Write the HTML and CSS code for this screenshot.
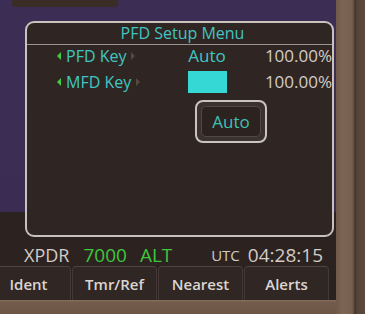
FILE: index.html
```html
<!DOCTYPE html>
<html>
<head>
<meta charset="utf-8">
<link rel="stylesheet" href="styles.css">
</head>
<body>
<div class="device">
  <div class="main">
    <div class="map">
      <div class="mini"></div>
      <div class="panel">
        <div class="title">PFD Setup Menu</div>
        <div class="rows">
          <div class="row">
            <div class="label"><span class="tri-l"></span><span class="ltext">PFD Key</span><span class="tri-r"></span></div>
            <div class="value">Auto</div>
            <div class="pct">100.00%</div>
          </div>
          <div class="row">
            <div class="label"><span class="tri-l"></span><span class="ltext">MFD Key</span><span class="tri-r"></span></div>
            <div class="value"><span class="block"></span></div>
            <div class="pct">100.00%</div>
          </div>
        </div>
        <div class="btn"><div class="btn-inner">Auto</div></div>
      </div>
    </div>
    <div class="status">
      <span class="xpdr">XPDR</span>
      <span class="code">7000</span>
      <span class="mode">ALT</span>
      <span class="utc">UTC</span>
      <span class="time">04:28:15</span>
    </div>
    <div class="softkeys">
      <div class="sk">Ident</div>
      <div class="sk">Tmr/Ref</div>
      <div class="sk">Nearest</div>
      <div class="sk">Alerts</div>
    </div>
  </div>
  <div class="bezel-r"></div>
  <div class="bezel-b"></div>
</div>
</body>
</html>
```
FILE: styles.css
```css
* { box-sizing: border-box; }
html, body { margin: 0; padding: 0; }
body {
  width: 365px;
  height: 314px;
  overflow: hidden;
  background: #2b221f;
  font-family: "Open Sans", Roboto, "Liberation Sans", sans-serif;
}
.device {
  display: grid;
  grid-template-columns: 336px 29px;
  grid-template-rows: 300px 14px;
  width: 365px;
  height: 314px;
}
.main {
  grid-column: 1;
  grid-row: 1;
  display: flex;
  flex-direction: column;
  overflow: hidden;
  background: #2c2320;
}
.map {
  height: 238px;
  display: flex;
  flex-direction: column;
  background: linear-gradient(#3b2d54 0, #3a2c52 212px, #2c2320 212px);
}
.mini {
  margin-left: 12px;
  width: 106px;
  height: 7px;
  background: #3a2c27;
  border-radius: 0 0 3px 3px;
}
.panel {
  margin-top: 14px;
  margin-left: 25px;
  width: 309px;
  height: 216px;
  border: 2px solid #c9c1bc;
  border-radius: 9px;
  background: #2f2623;
  display: flex;
  flex-direction: column;
}
.title {
  height: 21px;
  line-height: 21px;
  text-align: center;
  padding-left: 6px;
  color: #43c4c0;
  font-size: 16px;
  border-bottom: 1px solid #9d948f;
  box-sizing: content-box;
}
.rows {
  display: flex;
  flex-direction: column;
  gap: 4px;
  padding-left: 30px;
  margin-top: -1px;
}
.row {
  display: grid;
  grid-template-columns: 130px 40px 1fr;
  height: 22px;
  align-items: center;
}
.label {
  display: flex;
  align-items: center;
  color: #3fc6c2;
  font-size: 16px;
}
.tri-l {
  width: 0; height: 0;
  border-top: 4px solid transparent;
  border-bottom: 4px solid transparent;
  border-right: 4px solid #3ecb45;
  margin-right: 5px;
}
.tri-r {
  width: 0; height: 0;
  border-top: 4px solid transparent;
  border-bottom: 4px solid transparent;
  border-left: 4px solid #574842;
  margin-left: 5px;
}
.value {
  text-align: center;
  color: #3fc6c2;
  font-size: 17px;
  display: flex;
  justify-content: center;
  align-items: center;
}
.block {
  display: block;
  width: 39px;
  height: 22px;
  background: #36d8d6;
}
.pct {
  text-align: right;
  color: #d3ccc8;
  font-size: 17px;
}
.btn {
  margin-top: 8px;
  margin-left: 168px;
  width: 72px;
  height: 43px;
  border: 2px solid #cbc3be;
  border-radius: 8px;
  padding: 4px;
  background: #3b312e;
}
.btn-inner {
  width: 100%;
  height: 100%;
  border-radius: 5px;
  background: #2c2220;
  border: 1px solid #514744;
  color: #3fc0b4;
  font-size: 17px;
  display: flex;
  align-items: center;
  justify-content: center;
}
.status {
  height: 28px;
  display: flex;
  align-items: center;
  padding-top: 5px;
  font-size: 18px;
  color: #d2cbc7;
}
.xpdr { margin-left: 24px; }
.code { margin-left: 14px; color: #3ec63e; font-size: 19px; }
.mode { margin-left: 13px; color: #3ec63e; font-size: 19px; }
.utc { margin-left: auto; font-size: 15px; }
.time { margin-left: 8px; margin-right: 13px; font-size: 19px; }
.softkeys {
  height: 34px;
  display: flex;
  gap: 1px;
  margin-left: -14px;
  background: #2a2220;
}
.sk {
  width: 85px;
  flex: none;
  height: 34px;
  background: #302724;
  border-top: 1px solid #4e433e;
  border-left: 1px solid #443936;
  border-right: 1px solid #443936;
  border-radius: 4px 4px 0 0;
  color: #dbd5d1;
  font-size: 15px;
  font-weight: 600;
  display: flex;
  align-items: center;
  justify-content: center;
}
.bezel-r {
  grid-column: 2;
  grid-row: 1 / 3;
  background: linear-gradient(90deg, #6f5848 0, #7c6553 6px, #765f4e 16px, #5f4b3e 18px, #3e3129 19px, #56443a 21px, #5c493d 100%);
}
.bezel-b {
  grid-column: 1;
  grid-row: 2;
  background: linear-gradient(#8a7262 0, #735c4c 2px, #6c5646 100%);
}
```
